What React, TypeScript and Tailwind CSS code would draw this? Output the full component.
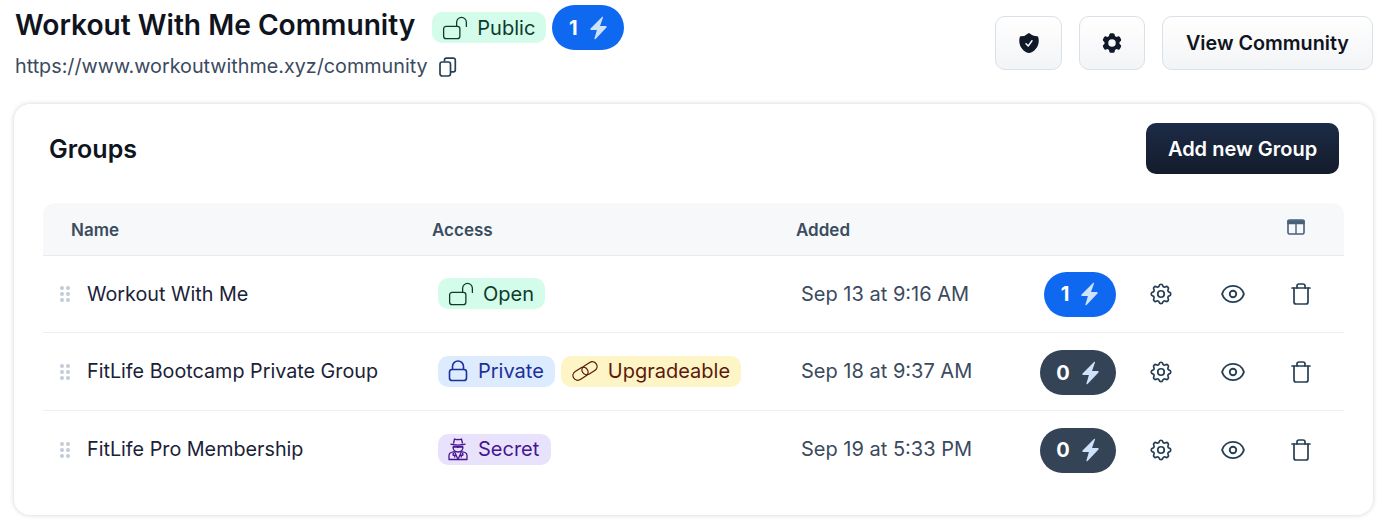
import { HiCog6Tooth, HiOutlineEye, HiOutlineLockOpen, HiShieldCheck } from 'react-icons/hi2';
import { TbSettings } from 'react-icons/tb';
import { Trash } from 'lucide-react';

function Dots() {
  return (
    <svg width="12" height="18" viewBox="0 0 12 18" className="fill-[#c2cdd8] shrink-0">
      <circle cx="3" cy="3" r="2" />
      <circle cx="9" cy="3" r="2" />
      <circle cx="3" cy="9" r="2" />
      <circle cx="9" cy="9" r="2" />
      <circle cx="3" cy="15" r="2" />
      <circle cx="9" cy="15" r="2" />
    </svg>
  );
}

function CopyIcon() {
  return (
    <svg width="20" height="20" viewBox="0 0 20 20" fill="none" stroke="currentColor" strokeWidth="1.7" className="text-[#263f55]">
      <rect x="2" y="5" width="10.5" height="14" rx="2.2" />
      <path d="M6.5 4.5V3A1.9 1.9 0 0 1 8.4 1.1h7A1.9 1.9 0 0 1 17.3 3v10a1.9 1.9 0 0 1-1.9 1.9h-2.6" />
    </svg>
  );
}

function ClosedLockIcon() {
  return (
    <svg width="20" height="22" viewBox="0 0 20 22" fill="none" stroke="currentColor" strokeWidth="1.6">
      <path d="M4.5 10V6.5a5.5 5.5 0 0 1 11 0V10" />
      <rect x="1.5" y="9.5" width="17" height="11" rx="2.6" />
    </svg>
  );
}

function LinkIcon() {
  return (
    <svg width="26" height="20" viewBox="0 0 26 20" fill="none" stroke="currentColor" strokeWidth="1.3">
      <rect x="0.5" y="8" width="16" height="9.5" rx="4.75" transform="rotate(-32 8.5 12.75)" />
      <rect x="9.5" y="2.5" width="16" height="9.5" rx="4.75" transform="rotate(-32 17.5 7.25)" />
    </svg>
  );
}

function BoltIcon() {
  return (
    <svg width="20" height="24" viewBox="0 0 18 24" preserveAspectRatio="none" className="fill-[#cfe2fb]">
      <path d="M12.6 1 2.3 12.6c-.5.6-.2 1.4.6 1.4h5.100L5.800 22.500c-.2.6.5 1 1 .5l9.800-11.600c.5-.6.2-1.400-.6-1.400h-5.200l2.700-8.500c.2-.6-.5-1-.9-.5Z" />
    </svg>
  );
}

function SpyIcon() {
  return (
    <svg width="20" height="24" viewBox="0 0 20 24" fill="none" stroke="currentColor" strokeWidth="1.3" strokeLinejoin="round">
      <path d="M5.5 6.5 6.5 2c1.2.7 2.3.7 3.5.3 1.200.4 2.300.4 3.500-.3l1 4.500" />
      <path d="M2.500 7.200c4.500 1 10.500 1 15 0" />
      <path d="M5 9.500c0 3.500 2 5.500 5 5.500s5-2 5-5.500" />
      <path d="M5 9.800h4.200M10.800 9.800H15M9.200 10h1.600" strokeWidth="1.800" />
      <path d="M6.500 14.500 3 15.500c-1.300.5-2 1.500-2 3v4h18v-4c0-1.500-.7-2.500-2-3l-3.500-1" />
      <path d="m6.500 14.500 3.500 8 3.500-8M5.500 15.500 5 18l2 .5-.5 2M14.500 15.500l.5 2.500-2 .5.500 2" />
    </svg>
  );
}

function ColumnsIcon() {
  return (
    <svg width="18" height="16" viewBox="0 0 18 16" fill="none" className="-mt-[8px] text-[#47617a]">
      <rect x="1" y="1" width="16" height="14" rx="1.5" stroke="currentColor" strokeWidth="1.6" />
      <path d="M1 2h16v2.500H1zM9 4v11" fill="currentColor" stroke="currentColor" strokeWidth="1.4" />
    </svg>
  );
}

function BoltPill({ count, active }: { count: number; active?: boolean }) {
  return (
    <div
      className={`flex h-[45px] items-center justify-center gap-[10px] rounded-full text-[20px] font-bold text-white ${
        active ? 'w-[72px] bg-[#0e68f0]' : 'w-[76px] bg-[#344356]'
      }`}
    >
      <span>{count}</span>
      <BoltIcon />
    </div>
  );
}

function Actions() {
  return (
    <div className="flex items-center text-[#263f55]">
      <TbSettings className="ml-[32px] h-[26px] w-[26px]" strokeWidth={1.6} />
      <HiOutlineEye className="ml-[46px] h-[26px] w-[26px]" strokeWidth={1.7} />
      <Trash className="ml-[43px] h-[24px] w-[24px]" strokeWidth={1.7} />
    </div>
  );
}

function Row({ name, date, count, active, badges, height, textClass, badgeClass, pillClass }: {
  name: string;
  date: string;
  count: number;
  active?: boolean;
  badges: React.ReactNode;
  height: string;
  textClass: string;
  badgeClass: string;
  pillClass: string;
}) {
  return (
    <div className={`flex items-center ${height}`}>
      <div className="flex w-[395px] items-center gap-[16px] pl-[16px]">
        <Dots />
        <span className={`text-[19.75px] leading-[30px] text-[#1a2238] ${textClass}`}>{name}</span>
      </div>
      <div className={`flex w-[363px] items-center gap-[6px] ${badgeClass}`}>{badges}</div>
      <div className={`w-[239px] text-[20px] leading-[30px] text-[#3b4a5e] ${textClass}`}>{date}</div>
      <div className={`flex w-[76px] ${active ? 'justify-end' : ''} ${pillClass}`}><BoltPill count={count} active={active} /></div>
      <Actions />
    </div>
  );
}

export default function App() {
  return (
    <div className="h-[527px] w-[1381px] overflow-hidden bg-white font-['Inter',sans-serif]">
      <div className="flex h-[104px] items-start justify-between pl-[15px] pr-[8px]">
        <div>
          <div className="flex h-[55px] items-center">
            <h1 className="-mt-[5px] text-[28.15px] font-semibold text-[#0f1420]">Workout With Me Community</h1>
            <div className="ml-[17px] flex h-[31px] items-center gap-[9px] rounded-[10px] bg-[#d3fcea] pl-[10px] pr-[11px] text-[20px] text-[#0d3b2c]">
              <HiOutlineLockOpen className="h-[26px] w-[26px]" strokeWidth={1.2} />
              Public
            </div>
            <div className="ml-[6px]"><BoltPill count={1} active /></div>
          </div>
          <div className="-mt-[3px] flex items-center gap-[10px] text-[19.75px] text-[#3b4a5e]">
            https://www.workoutwithme.xyz/community
            <CopyIcon />
          </div>
        </div>
        <div className="mt-[16px] flex gap-[17px]">
          <button className="flex h-[54px] w-[67px] items-center justify-center rounded-[10px] border border-[#d9e0e8] bg-gradient-to-b from-white to-[#f3f4f6] text-[#111827]">
            <HiShieldCheck className="h-[24px] w-[24px]" />
          </button>
          <button className="flex h-[54px] w-[66px] items-center justify-center rounded-[10px] border border-[#d9e0e8] bg-gradient-to-b from-white to-[#f3f4f6] text-[#111827]">
            <HiCog6Tooth className="h-[24px] w-[24px]" />
          </button>
          <button className="h-[54px] w-[211px] rounded-[10px] border border-[#d9e0e8] bg-gradient-to-b from-white to-[#f3f4f6] pt-[2px] text-[19.75px] font-semibold text-[#0f1420]">
            View Community
          </button>
        </div>
      </div>

      <div className="ml-[14px] h-[411px] w-[1359px] rounded-[16px] bg-white px-[29px] shadow-[0_0_5px_rgba(0,0,0,0.18)]">
        <div className="flex h-[99px] items-center justify-between pb-[11px] pl-[6px] pr-[5px]">
          <h2 className="mt-[3px] text-[25px] font-semibold text-[#0f1420]">Groups</h2>
          <button className="h-[51px] w-[193px] rounded-[10px] bg-gradient-to-b from-[#1c2b46] to-[#141c2c] pt-[2px] text-[20px] font-semibold text-white">
            Add new Group
          </button>
        </div>
        <div className="flex h-[53px] items-center rounded-t-[12px] border-b border-[#e8ebf0] bg-[#f7f8fa] pt-[3px] text-[17px] font-semibold text-[#3a4d60]">
          <div className="w-[389px] pl-[28px]">Name</div>
          <div className="w-[364px]">Access</div>
          <div className="w-[491px]">Added</div>
          <ColumnsIcon />
        </div>
        <div className="divide-y divide-[#eceef3]">
          <Row
            name="Workout With Me"
            date="Sep 13 at 9:16 AM"
            count={1}
            active
            height="h-[77px]"
            textClass=""
            badgeClass="pb-[2px]"
            pillClass=""
            badges={
              <div className="flex h-[31px] items-center gap-[9px] rounded-[10px] bg-[#d3fcea] pl-[10px] pr-[11px] pt-[1px] text-[20px] text-[#0d3b2c]">
                <HiOutlineLockOpen className="h-[26px] w-[26px]" strokeWidth={1.2} />
                Open
              </div>
            }
          />
          <Row
            name="FitLife Bootcamp Private Group"
            date="Sep 18 at 9:37 AM"
            count={0}
            height="h-[78px]"
            textClass="pb-[2px]"
            badgeClass=""
            pillClass="pt-[2px]"
            badges={
              <>
                <div className="flex h-[31px] items-center gap-[10px] rounded-[10px] bg-[#dcebfe] pb-[1px] pl-[10px] pr-[11px] text-[20px] text-[#1e2f9c]">
                  <ClosedLockIcon />
                  Private
                </div>
                <div className="flex h-[31px] items-center gap-[10px] rounded-[10px] bg-[#fef5c7] pb-[1px] pl-[11px] pr-[11px] text-[20px] text-[#5c1a0c]">
                  <LinkIcon />
                  Upgradeable
                </div>
              </>
            }
          />
          <Row
            name="FitLife Pro Membership"
            date="Sep 19 at 5:33 PM"
            count={0}
            height="h-[78px]"
            textClass="pb-[2px]"
            badgeClass="pb-[2px]"
            pillClass=""
            badges={
              <div className="flex h-[31px] items-center gap-[10px] rounded-[10px] bg-[#e8e2fd] pl-[10px] pr-[12px] text-[20px] text-[#47168f]">
                <SpyIcon />
                Secret
              </div>
            }
          />
        </div>
      </div>
    </div>
  );
}
